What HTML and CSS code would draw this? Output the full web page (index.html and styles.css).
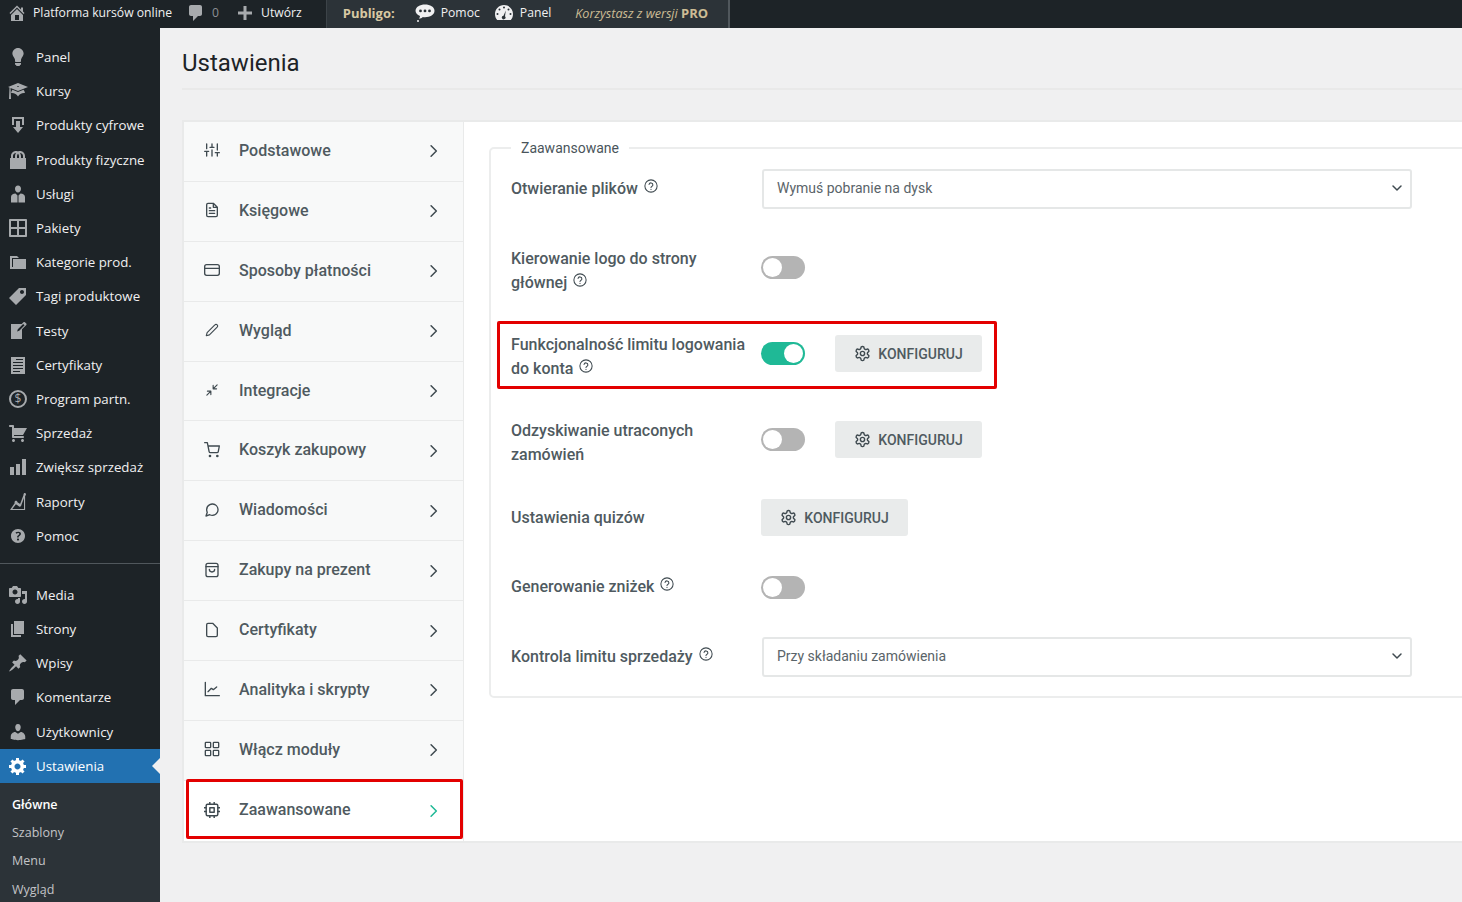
FILE: index.html
```html
<!DOCTYPE html>
<html lang="pl">
<head>
  <meta charset="UTF-8">
  <meta name="viewport" content="width=device-width, initial-scale=1.0">
  <title>Ustawienia</title>
  <link rel="stylesheet" href="styles.css">
</head>
<body>
  <svg class="sprite" xmlns="http://www.w3.org/2000/svg">
    <symbol id="d-home" viewBox="0 0 20 20"><path d="M16 8.5l1.53 1.53-1.06 1.06L10 4.62l-6.47 6.47-1.06-1.06L10 2.5l4 4v-2h2v4zm-6-2.46l6 5.99V18H4v-5.97zM12 17v-5H8v5h4z"/></symbol>
    <symbol id="d-comment" viewBox="0 0 20 20"><path d="M5 2h9c1.1 0 2 .9 2 2v7c0 1.1-.9 2-2 2h-2l-5 5v-5H5c-1.1 0-2-.9-2-2V4c0-1.1.9-2 2-2z"/></symbol>
    <symbol id="d-plus" viewBox="0 0 20 20"><path d="M17 8.5v3h-5.5V17h-3v-5.5H3v-3h5.5V3h3v5.5z"/></symbol>
    <symbol id="d-bulb" viewBox="0 0 20 20"><path d="M10 1c3.11 0 5.63 2.52 5.63 5.62 0 1.84-2.03 4.58-2.03 4.58-.33.44-.6 1.25-.6 1.8v1c0 .55-.45 1-1 1H8c-.55 0-1-.45-1-1v-1c0-.55-.27-1.36-.6-1.8 0 0-2.02-2.74-2.02-4.58C4.38 3.52 6.89 1 10 1zM7 16.87V16h6v.87c0 .62-.13 1.13-.75 1.13H12c0 .62-.4 1-1.02 1h-2c-.61 0-.98-.38-.98-1h-.25c-.62 0-.75-.51-.75-1.13z"/></symbol>
    <symbol id="d-learn" viewBox="0 0 20 20"><path d="M10 10L2.54 7.02 3 18H1l.48-11.41L0 6l10-4 10 4zm0-5c-.55 0-1 .22-1 .5s.45.5 1 .5 1-.22 1-.5-.45-.5-1-.5zm0 6l5.57-2.23c.71.94 1.2 2.07 1.36 3.3-.3-.04-.61-.07-.93-.07-2.55 0-4.78 1.37-6 3.41C8.78 13.37 6.55 12 4 12c-.32 0-.63.03-.93.07.16-1.23.65-2.36 1.36-3.3z"/></symbol>
    <symbol id="d-download" viewBox="0 0 20 20"><path d="M14.01 4v6h2V2H4v8h2.01V4h8zm-2 2v6h3l-5 6-5-6h3V6h4z"/></symbol>
    <symbol id="d-products" viewBox="0 0 20 20"><path d="M17 8h1v11H2V8h1V6c0-2.76 2.24-5 5-5 .71 0 1.39.15 2 .42.61-.27 1.29-.42 2-.42 2.76 0 5 2.24 5 5v2zM5 6v2h2V6c0-1.13.39-2.16 1.02-3H8C6.35 3 5 4.35 5 6zm10 2V6c0-1.65-1.35-3-3-3h-.02c.63.84 1.02 1.87 1.02 3v2h2zm-5-4.22C9.39 4.33 9 5.12 9 6v2h2V6c0-.88-.39-1.67-1-2.22z"/></symbol>
    <symbol id="d-man" viewBox="0 0 20 20"><path d="M10 1.5c1.9 0 3 1.5 3 3.3 0 1.9-1.2 3.7-3 3.7S7 6.700 7 4.800c0-1.800 1.100-3.300 3-3.300zM7.500 9.500L9.500 11.500V18.500H3V13c0-2 2-3.500 4.500-3.500zM12.500 9.500c2.500 0 4.500 1.500 4.500 3.500v5.500h-6.500v-7z"/></symbol>
    <symbol id="d-grid" viewBox="0 0 20 20"><path d="M2 1h16c.55 0 1 .45 1 1v16c0 .55-.45 1-1 1H2c-.55 0-1-.45-1-1V2c0-.55.45-1 1-1zm7.010 7.990v-6H3v6h6.010zm8 0v-6h-6v6h6zm-8 8.010v-6H3v6h6.010zm8 0v-6h-6v6h6z"/></symbol>
    <symbol id="d-category" viewBox="0 0 20 20"><path d="M5 7h13v10H2V4h7l2 2H4v9h1V7z"/></symbol>
    <symbol id="d-tag" viewBox="0 0 20 20"><path d="M11 2h7v7L8 19l-7-7zm3 6c1.100 0 2-.9 2-2s-.9-2-2-2-2 .9-2 2 .9 2 2 2z"/></symbol>
    <symbol id="d-write" viewBox="0 0 20 20"><path d="M16.890 1.200l1.410 1.410c.39.39.39 1.020 0 1.410L14 8.330V18H3V3h10.670l1.810-1.800c.4-.39 1.030-.4 1.410 0zm-5.660 8.480l5.370-5.360-1.420-1.420-5.360 5.370-.71 2.120z"/></symbol>
    <symbol id="d-doc" viewBox="0 0 20 20"><path fill-rule="evenodd" d="M3 2h14v17H3zM8 4v1h7V4zM5 7v1h10V7zM5 10v1h10v-1zM5 13v1h10v-1zM5 16v1h7v-1z"/></symbol>
    <symbol id="d-cart" viewBox="0 0 20 20"><path d="M6 13h9c.55 0 1 .45 1 1s-.45 1-1 1H5c-.55 0-1-.45-1-1V4H2c-.55 0-1-.45-1-1s.45-1 1-1h3c.55 0 1 .45 1 1v2h13l-4 7H6v1zm-.5 3c.83 0 1.500.67 1.500 1.500S6.330 19 5.500 19 4 18.330 4 17.500 4.670 16 5.500 16zm9 0c.83 0 1.500.67 1.500 1.500s-.67 1.500-1.500 1.500-1.500-.67-1.500-1.500.67-1.500 1.500-1.500z"/></symbol>
    <symbol id="d-bars" viewBox="0 0 20 20"><path d="M18 18V2h-4v16h4zm-6 0V7H8v11h4zm-6 0v-8H2v8h4z"/></symbol>
    <symbol id="d-line" viewBox="0 0 20 20"><path d="M18 2.500c0 .6-.4 1.100-.9 1.400V18H2l4.800-6.900c-.2-.2-.3-.5-.3-.8 0-.8.7-1.500 1.500-1.500s1.500.7 1.500 1.500l2.300 1.500c.1-.1.300-.2.500-.3L15.500 3c-.1-.1 0-.3 0-.5 0-.8.6-1.500 1.300-1.500S18 1.700 18 2.500zM16 16.900V6l-2.700 7.300c0 .8-.7 1.400-1.500 1.400-.6 0-1.100-.3-1.300-.8l-2.600-1.700-3.600 4.700z"/></symbol>
    <symbol id="d-help" viewBox="0 0 20 20"><path fill-rule="evenodd" d="M17 10c0-3.870-3.140-7-7-7-3.870 0-7 3.130-7 7s3.130 7 7 7c3.860 0 7-3.130 7-7zm-6.300 1.480H9.140v-.43c0-.38.08-.7.24-.98s.46-.57.88-.89c.41-.29.68-.53.81-.71.14-.18.2-.39.2-.62 0-.25-.09-.44-.28-.58-.19-.13-.45-.19-.79-.19-.58 0-1.250.19-2 .57l-.64-1.280c.87-.49 1.800-.74 2.770-.74.81 0 1.450.2 1.920.58.48.39.71.91.71 1.550 0 .43-.09.8-.29 1.110-.19.32-.57.67-1.110 1.060-.38.28-.61.49-.71.63-.1.15-.15.34-.15.57v.35zm-1.470 2.740c-.18-.17-.27-.42-.27-.73 0-.33.08-.58.26-.75s.43-.25.77-.25c.32 0 .57.09.75.26s.27.42.27.74c0 .3-.09.55-.27.72-.18.18-.43.27-.75.27-.33 0-.58-.09-.76-.26z"/></symbol>
    <symbol id="d-media" viewBox="0 0 20 20"><path d="M13 11V4c0-.55-.45-1-1-1h-1.670L9 1H5L3.670 3H2c-.55 0-1 .45-1 1v7c0 .55.45 1 1 1h10c.55 0 1-.45 1-1zM7 4.500c1.380 0 2.500 1.120 2.500 2.500S8.380 9.500 7 9.500 4.500 8.380 4.500 7 5.620 4.500 7 4.500zM14 6h5v10.500c0 1.380-1.120 2.500-2.500 2.500S14 17.880 14 16.500s1.120-2.500 2.500-2.500c.17 0 .34.02.5.05V9h-3V6zm-4 8.050V13h2v3.500c0 1.380-1.120 2.500-2.500 2.500S7 17.880 7 16.500 8.120 14 9.500 14c.17 0 .34.02.5.05z"/></symbol>
    <symbol id="d-page" viewBox="0 0 20 20"><path d="M6 15V2h10v13H6zm-1 1h8v2H3V5h2v11z"/></symbol>
    <symbol id="d-pin" viewBox="0 0 20 20"><path d="M10.440 3.020l1.820-1.820 6.360 6.350-1.830 1.820c-1.050-.68-2.480-.57-3.410.36l-.75.75c-.92.93-1.040 2.350-.35 3.410l-1.830 1.820-2.410-2.410-2.800 2.790c-.42.42-3.380 2.710-3.800 2.290s1.860-3.390 2.280-3.810l2.790-2.790L4.100 9.360l1.830-1.820c1.050.69 2.480.57 3.400-.36l.75-.75c.93-.92 1.050-2.350.36-3.410z"/></symbol>
    <symbol id="d-users" viewBox="0 0 20 20"><path d="M10 9.250c-2.270 0-2.730-3.440-2.730-3.440C7 4.020 7.820 2 9.970 2c2.160 0 2.980 2.020 2.710 3.810 0 0-.41 3.440-2.680 3.440zm0 2.570L12.720 10c2.390 0 4.520 2.330 4.520 4.530v2.490s-3.650 1.130-7.240 1.130c-3.650 0-7.240-1.130-7.240-1.130v-2.490c0-2.250 1.940-4.480 4.470-4.480z"/></symbol>
    <symbol id="d-settings" viewBox="0 0 20 20"><path d="M18 12h-2.180c-.17.7-.44 1.350-.81 1.930l1.540 1.540-2.100 2.100-1.540-1.540c-.58.36-1.230.63-1.910.79V19H8v-2.180c-.68-.16-1.330-.43-1.910-.79l-1.540 1.540-2.120-2.120 1.540-1.540c-.36-.58-.63-1.230-.79-1.910H1V9.030h2.170c.16-.7.44-1.350.8-1.940L2.430 5.550l2.100-2.100 1.540 1.540c.58-.37 1.240-.64 1.930-.81V2h3v2.180c.68.16 1.330.43 1.910.79l1.540-1.540 2.120 2.120-1.540 1.540c.36.59.64 1.240.8 1.940H18V12zm-8.500 1.500c1.660 0 3-1.340 3-3s-1.340-3-3-3-3 1.340-3 3 1.340 3 3 3z"/></symbol>
    <symbol id="d-bubble" viewBox="0 0 20 20"><path fill-rule="evenodd" d="M10 1.500c5 0 9.500 2.400 9.500 6.300s-4.500 6.400-9.500 6.400c-.8 0-1.500 0-2.200-.2-.9 1-2.300 1.500-4 1.600.8-.7 1.200-1.500 1.200-2.600C2.200 11.800.5 10 .5 7.800.5 3.900 5 1.500 10 1.500zM5.500 6.500a1.400 1.400 0 1 0 0 2.800 1.400 1.400 0 0 0 0-2.800zM10 6.500a1.400 1.400 0 1 0 0 2.800 1.400 1.400 0 0 0 0-2.800zM14.500 6.500a1.400 1.400 0 1 0 0 2.800 1.400 1.400 0 0 0 0-2.800z"/><circle cx="3" cy="18" r="1"/></symbol>
    <symbol id="d-gauge" viewBox="0 0 20 20"><path fill-rule="evenodd" d="M10 2c5 0 9 4 9 9 0 2.500-.8 4.700-2.200 6H3.200C1.800 15.700 1 13.500 1 11c0-5 4-9 9-9zM10 3.500a1 1 0 1 0 0 2 1 1 0 0 0 0-2zM5.500 5.500a1 1 0 1 0 0 2 1 1 0 0 0 0-2zM14.500 5.500a1 1 0 1 0 0 2 1 1 0 0 0 0-2zM3.500 10a1 1 0 1 0 0 2 1 1 0 0 0 0-2zM16.500 10a1 1 0 1 0 0 2 1 1 0 0 0 0-2zM11.800 7.500L9.500 12.700a1.800 1.800 0 1 0 1.500.6z"/></symbol>

    <symbol id="i-sliders" viewBox="0 0 24 24"><path d="M4 21v-7M4 10V3M12 21v-9M12 8V3M20 21v-5M20 12V3M1 14h6M9 8h6M17 16h6"/></symbol>
    <symbol id="i-file-text" viewBox="0 0 24 24"><path d="M14 2H6a2 2 0 0 0-2 2v16a2 2 0 0 0 2 2h12a2 2 0 0 0 2-2V8zM14 2v6h6M16 13H8M16 17H8M10 9H8"/></symbol>
    <symbol id="i-card" viewBox="0 0 24 24"><rect x="1" y="4" width="22" height="16" rx="3"/><path d="M1 9.500h22"/></symbol>
    <symbol id="i-pencil" viewBox="-2 -2 28 28"><path d="M17 3a2.830 2.830 0 1 1 4 4L7.500 20.500 2 22l1.500-5.500L17 3z"/></symbol>
    <symbol id="i-minimize" viewBox="-2 -2 28 28"><path d="M4 14h6v6M20 10h-6V4M14 10l7-7M3 21l7-7"/></symbol>
    <symbol id="i-cart" viewBox="0 0 24 24"><circle cx="9" cy="21" r="1"/><circle cx="20" cy="21" r="1"/><path d="M1 1h4l2.680 13.390a2 2 0 0 0 2 1.610h9.720a2 2 0 0 0 2-1.610L23 6H6"/></symbol>
    <symbol id="i-message" viewBox="0 0 24 24"><path d="M3 11.500a8.380 8.380 0 0 0 .9 3.800 8.500 8.500 0 0 0 7.600 4.700 8.380 8.380 0 0 0 3.800-.9L21 21l-1.900-5.700a8.380 8.380 0 0 0 .9-3.800 8.500 8.500 0 0 0-4.700-7.600 8.380 8.380 0 0 0-3.800-.9h-.5a8.480 8.480 0 0 0-8 8v.5z" transform="matrix(-1 0 0 1 24 0)"/></symbol>
    <symbol id="i-bag" viewBox="0 0 24 24"><rect x="3" y="2" width="18" height="20" rx="3"/><path d="M3 7h18M8 11a4 4 0 0 0 8 0"/></symbol>
    <symbol id="i-file" viewBox="0 0 24 24"><path d="M13 2H6a2 2 0 0 0-2 2v16a2 2 0 0 0 2 2h12a2 2 0 0 0 2-2V9z"/></symbol>
    <symbol id="i-chart" viewBox="0 0 24 24"><path d="M2 2v20h21M6 16l5-5 3 2 5-4"/></symbol>
    <symbol id="i-grid" viewBox="0 0 24 24"><rect x="2" y="2" width="8" height="8" rx="1"/><rect x="14" y="2" width="8" height="8" rx="1"/><rect x="2" y="14" width="8" height="8" rx="1"/><rect x="14" y="14" width="8" height="8" rx="1"/></symbol>
    <symbol id="i-cpu" viewBox="1 1 22 22"><rect x="4" y="4" width="16" height="16" rx="2"/><rect x="9" y="9" width="6" height="6"/><path d="M9 1v3M15 1v3M9 20v3M15 20v3M20 9h3M20 14h3M1 9h3M1 14h3"/></symbol>
    <symbol id="i-chevron" viewBox="0 0 24 24"><path d="M7 3l9 9-9 9"/></symbol>
    <symbol id="i-chevron-down" viewBox="0 0 24 24"><path d="M4 8l8 8 8-8"/></symbol>
    <symbol id="i-gear" viewBox="0 0 24 24"><path d="M12.220 2h-.44a2 2 0 0 0-2 2v.18a2 2 0 0 1-1 1.730l-.43.25a2 2 0 0 1-2 0l-.15-.08a2 2 0 0 0-2.730.73l-.22.38a2 2 0 0 0 .73 2.730l.15.1a2 2 0 0 1 1 1.720v.51a2 2 0 0 1-1 1.740l-.15.09a2 2 0 0 0-.73 2.730l.22.38a2 2 0 0 0 2.730.73l.15-.08a2 2 0 0 1 2 0l.43.25a2 2 0 0 1 1 1.730V20a2 2 0 0 0 2 2h.44a2 2 0 0 0 2-2v-.18a2 2 0 0 1 1-1.730l.43-.25a2 2 0 0 1 2 0l.15.08a2 2 0 0 0 2.730-.73l.22-.39a2 2 0 0 0-.73-2.730l-.15-.08a2 2 0 0 1-1-1.740v-.5a2 2 0 0 1 1-1.740l.15-.09a2 2 0 0 0 .73-2.730l-.22-.38a2 2 0 0 0-2.730-.73l-.15.08a2 2 0 0 1-2 0l-.43-.25a2 2 0 0 1-1-1.730V4a2 2 0 0 0-2-2z"/><circle cx="12" cy="12" r="3"/></symbol>
    <symbol id="i-help" viewBox="0 0 24 24"><circle cx="12" cy="12" r="10.500"/><path d="M8.700 9.200a3.300 3.300 0 0 1 6.500 1c0 2.200-3.200 2.600-3.200 4.300M12 17.600v.4"/></symbol>
  </svg>

  <header class="adminbar">
    <a class="bar-item bar-site"><svg class="bar-icon"><use href="#d-home"/></svg>Platforma kursów online</a>
    <a class="bar-item bar-comments"><svg class="bar-icon"><use href="#d-comment"/></svg><span class="bar-count">0</span></a>
    <a class="bar-item bar-new"><svg class="bar-icon"><use href="#d-plus"/></svg>Utwórz</a>
    <div class="bar-publigo">
      <strong class="publigo-name">Publigo:</strong>
      <a class="bar-item bar-help"><svg class="bar-icon-light"><use href="#d-bubble"/></svg>Pomoc</a>
      <a class="bar-item bar-panel"><svg class="bar-icon-light"><use href="#d-gauge"/></svg>Panel</a>
      <span class="publigo-plan">Korzystasz z wersji <b>PRO</b></span>
    </div>
  </header>

  <div class="layout">
    <aside class="sidebar">
      <ul class="menu">
        <li><svg><use href="#d-bulb"/></svg>Panel</li>
        <li><svg><use href="#d-learn"/></svg>Kursy</li>
        <li><svg><use href="#d-download"/></svg>Produkty cyfrowe</li>
        <li><svg><use href="#d-products"/></svg>Produkty fizyczne</li>
        <li><svg><use href="#d-man"/></svg>Usługi</li>
        <li><svg><use href="#d-grid"/></svg>Pakiety</li>
        <li><svg><use href="#d-category"/></svg>Kategorie prod.</li>
        <li><svg><use href="#d-tag"/></svg>Tagi produktowe</li>
        <li><svg><use href="#d-write"/></svg>Testy</li>
        <li><svg><use href="#d-doc"/></svg>Certyfikaty</li>
        <li><span class="dollar">$</span>Program partn.</li>
        <li><svg><use href="#d-cart"/></svg>Sprzedaż</li>
        <li><svg><use href="#d-bars"/></svg>Zwiększ sprzedaż</li>
        <li><svg><use href="#d-line"/></svg>Raporty</li>
        <li><svg><use href="#d-help"/></svg>Pomoc</li>
      </ul>
      <div class="menu-sep"></div>
      <ul class="menu">
        <li><svg><use href="#d-media"/></svg>Media</li>
        <li><svg><use href="#d-page"/></svg>Strony</li>
        <li><svg><use href="#d-pin"/></svg>Wpisy</li>
        <li><svg><use href="#d-comment"/></svg>Komentarze</li>
        <li><svg><use href="#d-users"/></svg>Użytkownicy</li>
        <li class="current"><svg><use href="#d-settings"/></svg>Ustawienia</li>
      </ul>
      <ul class="submenu">
        <li class="sub-current">Główne</li>
        <li>Szablony</li>
        <li>Menu</li>
        <li>Wygląd</li>
      </ul>
    </aside>

    <main class="content">
      <h1 class="page-title">Ustawienia</h1>
      <div class="card">
        <nav class="tabs">
          <a class="tab"><svg class="tab-icon"><use href="#i-sliders"/></svg><span>Podstawowe</span><svg class="tab-arrow"><use href="#i-chevron"/></svg></a>
          <a class="tab"><svg class="tab-icon"><use href="#i-file-text"/></svg><span>Księgowe</span><svg class="tab-arrow"><use href="#i-chevron"/></svg></a>
          <a class="tab"><svg class="tab-icon"><use href="#i-card"/></svg><span>Sposoby płatności</span><svg class="tab-arrow"><use href="#i-chevron"/></svg></a>
          <a class="tab"><svg class="tab-icon"><use href="#i-pencil"/></svg><span>Wygląd</span><svg class="tab-arrow"><use href="#i-chevron"/></svg></a>
          <a class="tab"><svg class="tab-icon"><use href="#i-minimize"/></svg><span>Integracje</span><svg class="tab-arrow"><use href="#i-chevron"/></svg></a>
          <a class="tab"><svg class="tab-icon"><use href="#i-cart"/></svg><span>Koszyk zakupowy</span><svg class="tab-arrow"><use href="#i-chevron"/></svg></a>
          <a class="tab"><svg class="tab-icon"><use href="#i-message"/></svg><span>Wiadomości</span><svg class="tab-arrow"><use href="#i-chevron"/></svg></a>
          <a class="tab"><svg class="tab-icon"><use href="#i-bag"/></svg><span>Zakupy na prezent</span><svg class="tab-arrow"><use href="#i-chevron"/></svg></a>
          <a class="tab"><svg class="tab-icon"><use href="#i-file"/></svg><span>Certyfikaty</span><svg class="tab-arrow"><use href="#i-chevron"/></svg></a>
          <a class="tab"><svg class="tab-icon"><use href="#i-chart"/></svg><span>Analityka i skrypty</span><svg class="tab-arrow"><use href="#i-chevron"/></svg></a>
          <a class="tab"><svg class="tab-icon"><use href="#i-grid"/></svg><span>Włącz moduły</span><svg class="tab-arrow"><use href="#i-chevron"/></svg></a>
          <a class="tab tab-active"><svg class="tab-icon"><use href="#i-cpu"/></svg><span>Zaawansowane</span><svg class="tab-arrow"><use href="#i-chevron"/></svg></a>
        </nav>

        <section class="panel">
          <fieldset class="group">
            <legend>Zaawansowane</legend>

            <div class="field">
              <label class="field-label">Otwieranie plików <svg class="help"><use href="#i-help"/></svg></label>
              <div class="select"><span>Wymuś pobranie na dysk</span><svg><use href="#i-chevron-down"/></svg></div>
            </div>

            <div class="field field-tall">
              <label class="field-label">Kierowanie logo do strony głównej <svg class="help"><use href="#i-help"/></svg></label>
              <span class="toggle"></span>
            </div>

            <div class="field field-tall field-marked">
              <label class="field-label">Funkcjonalność limitu logowania do konta <svg class="help"><use href="#i-help"/></svg></label>
              <span class="toggle toggle-on"></span>
              <button class="btn"><svg><use href="#i-gear"/></svg>Konfiguruj</button>
            </div>

            <div class="field field-tall">
              <label class="field-label">Odzyskiwanie utraconych zamówień</label>
              <span class="toggle"></span>
              <button class="btn"><svg><use href="#i-gear"/></svg>Konfiguruj</button>
            </div>

            <div class="field field-quiz">
              <label class="field-label">Ustawienia quizów</label>
              <button class="btn"><svg><use href="#i-gear"/></svg>Konfiguruj</button>
            </div>

            <div class="field">
              <label class="field-label">Generowanie zniżek <svg class="help"><use href="#i-help"/></svg></label>
              <span class="toggle"></span>
            </div>

            <div class="field">
              <label class="field-label">Kontrola limitu sprzedaży <svg class="help"><use href="#i-help"/></svg></label>
              <div class="select"><span>Przy składaniu zamówienia</span><svg><use href="#i-chevron-down"/></svg></div>
            </div>
          </fieldset>
        </section>
      </div>
    </main>
  </div>
</body>
</html>
```

FILE: styles.css
```css
html, body {
  height: 100%;
  margin: 0;
  overflow: hidden;
}

body {
  background: #f0f0f1;
  font-family: "Open Sans", sans-serif;
  color: #3c434a;
}

ul {
  list-style: none;
  margin: 0;
  padding: 0;
}

.sprite {
  display: none;
}

/* top bar */
.adminbar {
  display: flex;
  height: 28px;
  background: #1d2327;
  color: #f0f0f1;
  font-size: 12.2px;
  line-height: 26px;
}

.bar-item {
  display: flex;
  align-items: center;
  height: 26px;
}

.bar-icon {
  width: 20px;
  height: 20px;
  fill: #a7aaad;
  margin-right: 6px;
}

.bar-site {
  margin-left: 7px;
}

.bar-comments {
  margin-left: 14px;
}

.bar-count {
  color: #8c8f94;
}

.bar-new {
  margin-left: 16px;
}

.bar-publigo {
  display: flex;
  box-sizing: border-box;
  width: 404px;
  margin-left: 24px;
  background: #2c3338;
  border-left: 1px solid #3c4348;
  border-right: 2px solid #50575c;
}

.publigo-name {
  margin-left: 16px;
  color: #d8c9a3;
  font-size: 13px;
}

.bar-icon-light {
  width: 20px;
  height: 20px;
  fill: #f0f0f1;
  margin-right: 6px;
}

.bar-help {
  margin-left: 20px;
}

.bar-panel {
  margin-left: 14px;
}

.publigo-plan {
  margin-left: 24px;
  color: #cdbd95;
  font-style: italic;
  font-size: 12.6px;
}

.publigo-plan b {
  font-style: normal;
  font-size: 13px;
}

/* side menu */
.layout {
  display: flex;
  height: 874px;
}

.sidebar {
  flex: 0 0 160px;
  background: #1d2327;
  padding-top: 12px;
  color: #f0f0f1;
  font-size: 13.3px;
}

.menu li {
  position: relative;
  display: flex;
  align-items: center;
  height: 34.2px;
}

.menu svg {
  flex: none;
  width: 20px;
  height: 20px;
  margin: 0 8px;
  fill: #a7aaad;
}

.dollar {
  flex: none;
  box-sizing: border-box;
  width: 18px;
  height: 18px;
  margin: 0 9px;
  border: 2px solid #a7aaad;
  border-radius: 50%;
  color: #a7aaad;
  font-size: 12px;
  line-height: 14px;
  text-align: center;
}

.menu-sep {
  height: 1px;
  margin: 10px 0 14px;
  background: #50575c;
}

.menu .current {
  background: #2271b1;
  color: #fff;
}

.menu .current svg {
  fill: #fff;
}

.menu .current::after {
  content: "";
  position: absolute;
  right: 0;
  top: 9px;
  border: 8px solid transparent;
  border-right-color: #f0f0f1;
  border-left-width: 0;
}

.submenu {
  padding-top: 8px;
  height: 120px;
  background: #2c3338;
  color: #c3c4c7;
  font-size: 12.5px;
}

.submenu li {
  height: 28.2px;
  line-height: 28.2px;
  padding-left: 12px;
}

.submenu .sub-current {
  color: #fff;
  font-weight: 600;
}

/* settings page */
.content {
  flex: 1;
  min-width: 0;
  padding-left: 22px;
  font-family: Roboto, sans-serif;
}

.page-title {
  margin: 0 0 30px;
  padding: 19px 0 9px;
  border-bottom: 2px solid #e9e9e9;
  font-size: 24px;
  font-weight: 400;
  line-height: 32px;
  color: #1d2327;
}

.card {
  display: flex;
  width: 1400px;
  background: #fff;
  border: 2px solid #e9eaea;
  border-right: 0;
}

.tabs {
  flex: 0 0 279px;
  background: #f8f9f9;
  border-right: 1px solid #e9eaea;
}

.tab {
  position: relative;
  box-sizing: border-box;
  display: flex;
  align-items: center;
  height: 59.9px;
  border-bottom: 1px solid #e9eaea;
  padding: 0 0 2px 20px;
  font-size: 16px;
  font-weight: 500;
  color: #4f5a60;
}

.tab-icon {
  flex: none;
  width: 16px;
  height: 16px;
  margin-right: 19px;
  fill: none;
  stroke: #3f4a50;
  stroke-width: 2;
  stroke-linecap: round;
  stroke-linejoin: round;
}

.tab span {
  flex: 1;
}

.tab-arrow {
  flex: none;
  width: 14px;
  height: 14px;
  margin: 2px 22px 0 0;
  fill: none;
  stroke: #3f4a50;
  stroke-width: 2.6;
  stroke-linecap: round;
  stroke-linejoin: round;
}

.tab-active {
  background: #fff;
  border-bottom: 0;
}

.tab-active .tab-arrow {
  stroke: #1fb996;
}

.tab-active::after {
  content: "";
  position: absolute;
  left: 2px;
  top: -2px;
  right: 0;
  bottom: 2px;
  border: 3px solid #e30000;
  border-radius: 2px;
}

.panel {
  flex: 1;
  padding: 17px 0 0 25px;
}

.group {
  margin: 0;
  padding: 12px 0 19px 20px;
  border: 2px solid #eceded;
  border-radius: 5px;
}

.group legend {
  margin-left: 0;
  padding: 0 10px;
  font-size: 14px;
  line-height: 18px;
  color: #4a555b;
}

.field {
  position: relative;
  display: flex;
  align-items: center;
  margin-bottom: 38px;
}

.field:last-child {
  margin-bottom: 0;
}

/* two-line rows keep their controls near the top */
.field-tall {
  align-items: flex-start;
}

.field-tall .toggle {
  margin-top: 9px;
}

.field-tall .btn {
  margin-top: 2px;
}

.field-quiz {
  margin-top: -6px;
  margin-bottom: 39px;
}

.field-marked::after {
  content: "";
  position: absolute;
  left: -14px;
  top: -12px;
  width: 494px;
  height: 62px;
  border: 3px solid #e30000;
  border-radius: 2px;
}

.field-label {
  flex: 0 0 250px;
  box-sizing: border-box;
  padding-right: 10px;
  font-size: 16px;
  font-weight: 500;
  line-height: 24px;
  color: #4f5a60;
}

.help {
  width: 14px;
  height: 14px;
  margin-left: 2px;
  vertical-align: 1px;
  fill: none;
  stroke: #3f4a50;
  stroke-width: 1.8;
  stroke-linecap: round;
}

.select {
  box-sizing: border-box;
  display: flex;
  align-items: center;
  justify-content: space-between;
  width: 650px;
  height: 40px;
  margin-left: 1px;
  padding: 0 7px 2px 13px;
  border: 2px solid #e5e7e7;
  border-radius: 3px;
  background: #fff;
  font-size: 14px;
  color: #5a6469;
}

.select svg {
  width: 12px;
  height: 12px;
  fill: none;
  stroke: #3f4a50;
  stroke-width: 3;
  stroke-linecap: round;
  stroke-linejoin: round;
}

.toggle {
  position: relative;
  box-sizing: border-box;
  flex: none;
  width: 44px;
  height: 23px;
  border-radius: 12px;
  background: #b4b4b4;
}

.toggle::before {
  content: "";
  position: absolute;
  left: 2px;
  top: 2px;
  width: 19px;
  height: 19px;
  border-radius: 50%;
  background: #fff;
}

.toggle-on {
  background: #1fb996;
}

.toggle-on::before {
  left: 23px;
}

.btn {
  box-sizing: border-box;
  display: flex;
  align-items: center;
  justify-content: center;
  width: 147px;
  height: 37px;
  padding: 0;
  border: 0;
  border-radius: 3px;
  background: #e9ebeb;
  font-family: Roboto, sans-serif;
  font-size: 14px;
  font-weight: 500;
  color: #4f5a60;
  text-transform: uppercase;
}

.toggle + .btn {
  margin-left: 30px;
}

.btn svg {
  width: 17px;
  height: 17px;
  margin-right: 7px;
  fill: none;
  stroke: #3f4a50;
  stroke-width: 2;
  stroke-linecap: round;
  stroke-linejoin: round;
}
```
